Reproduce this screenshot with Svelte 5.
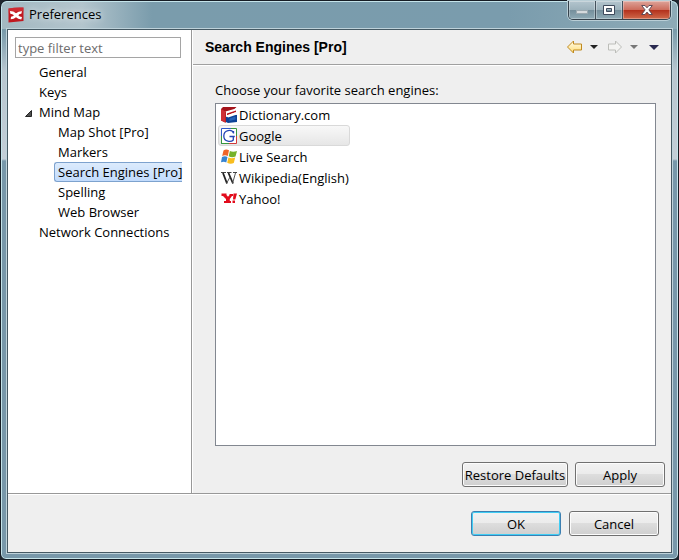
<script>
  const tree = [
    { name: 'General', level: 1 },
    { name: 'Keys', level: 1 },
    { name: 'Mind Map', level: 1, open: true },
    { name: 'Map Shot [Pro]', level: 2 },
    { name: 'Markers', level: 2 },
    { name: 'Search Engines [Pro]', level: 2 },
    { name: 'Spelling', level: 2 },
    { name: 'Web Browser', level: 2 },
    { name: 'Network Connections', level: 1 }
  ];
  const engines = [
    { name: 'Dictionary.com', icon: 'books' },
    { name: 'Google', icon: 'google' },
    { name: 'Live Search', icon: 'flag' },
    { name: 'Wikipedia(English)', icon: 'wiki' },
    { name: 'Yahoo!', icon: 'yahoo' }
  ];
  let page = $state('Search Engines [Pro]');
  let engine = $state('Google');
  let filter = $state('');
</script>

<div class="window">
  <header class="titlebar">
    <svg class="logo" width="16" height="16" viewBox="0 0 16 16">
      <path d="M.5 1.500 Q8 0 15.500 .5 V14 Q8 14.500 .5 15.500 Z" fill="#c01820" />
      <path d="M.5 1.500 Q8 0 15.500 .5 V4 Q8 4 .5 6Z" fill="#d83840" opacity=".6" />
      <path d="M2 4 Q5.500 4 8 6.300 Q11 3.800 14 4.200 L13.300 6.800 Q11.500 6.800 10.300 8.200 Q11.500 9.700 14 10 L13.300 12.500 Q10 12.200 8 10.200 Q6 12.300 2.700 12.300 L3 9.800 Q5 9.500 6 8.300 Q4.500 6.800 2.300 6.800Z" fill="#fff" />
    </svg>
    <span class="title">Preferences</span>
    <div class="controls">
      <button class="min" aria-label="Minimize">
        <svg width="12" height="5" viewBox="0 0 12 5"><rect x=".5" y=".5" width="11" height="3" fill="#d5dadd" stroke="#9ba9b0" /></svg>
      </button>
      <button class="max" aria-label="Maximize">
        <svg width="12" height="10" viewBox="0 0 12 10"><path d="M.5.5H11.500V9.500H.5Z M3.500 3.500V6.500H8.500V3.500Z" fill="#fff" fill-rule="evenodd" stroke="#3e4a5c" /></svg>
      </button>
      <button class="close" aria-label="Close">
        <svg width="12" height="10" viewBox="0 0 12 10"><path d="M.7.500H4L6 2.800 8 .5H11.300L7.900 4.900 11.300 9.500H8L6 7.100 4 9.500H.7L4.100 4.900Z" fill="#fff" stroke="#514250" stroke-width=".9" /></svg>
      </button>
    </div>
  </header>

  <main class="client">
    <div class="body">
      <nav class="sidebar">
        <input type="text" bind:value={filter} placeholder="type filter text" aria-label="Filter preferences" />
        <ul class="tree">
          {#each tree as node}
            <li class="level{node.level}">
              {#if node.open}
                <svg class="twisty" width="7" height="7" viewBox="0 0 7 7"><path d="M6.500 .5V6.500H.5Z" fill="#505050" stroke="#262626" /></svg>
              {/if}
              <button class:selected={page === node.name} onclick={() => (page = node.name)}>{node.name}</button>
            </li>
          {/each}
        </ul>
      </nav>

      <section class="panel">
        <div class="heading">
          <h1>Search Engines [Pro]</h1>
          <div class="history">
            <button aria-label="Back">
              <svg width="16" height="14" viewBox="0 0 16 14"><defs><linearGradient id="gold" x2="0" y2="1"><stop stop-color="#fffdf0" /><stop offset="1" stop-color="#ffdc70" /></linearGradient></defs><path d="M1.500 7 7.500 1V4H15.500V10H7.500V13Z" fill="url(#gold)" stroke="#c08a20" stroke-linejoin="round" /></svg>
            </button>
            <button aria-label="Back history"><svg width="8" height="4" viewBox="0 0 8 4"><path d="M0 0H8L4 4Z" fill="#222" /></svg></button>
            <button aria-label="Forward">
              <svg width="16" height="14" viewBox="0 0 16 14"><path d="M15.500 7 9.500 1V4H2.500V10H9.500V13Z" fill="#f4f4f2" stroke="#bcbdb9" stroke-linejoin="round" /></svg>
            </button>
            <button aria-label="Forward history"><svg width="8" height="4" viewBox="0 0 8 4"><path d="M0 0H8L4 4Z" fill="#777" /></svg></button>
            <button aria-label="Menu"><svg width="10" height="5" viewBox="0 0 10 5"><path d="M0 0H10L5 5Z" fill="#292950" /></svg></button>
          </div>
        </div>

        <div class="content">
          <p id="engines-label">Choose your favorite search engines:</p>
          <ul class="engines" aria-labelledby="engines-label">
            {#each engines as item}
              <li>
                <button class:selected={engine === item.name} onclick={() => (engine = item.name)}>
                  <svg width="16" height="16" viewBox="0 0 16 16">
                    {#if item.icon === 'books'}
                      <path d="M0 2 2 0H15.500L12 3.500 5 5V15.500H4L0 13.500Z" fill="#a3141b" />
                      <path d="M0 2 4.500 4.500V15.500L0 13.500Z" fill="#cf3038" />
                      <path d="M4.500 4.500 15 1.500V3.500L6 6.500Z" fill="#fff" />
                      <path d="M6 6.500 15 3.500V5L6 8.500Z" fill="#b5141c" />
                      <path d="M5 10 13 7 16 8V15L7 16 5 15Z" fill="#0c4296" />
                      <path d="M5 8.500 14 5.500 16 6V7.500L7 10.500Z" fill="#fff" />
                      <path d="M8.500 11.500 14.500 9.500V12.500L8.500 14Z" fill="#2463b8" />
                    {:else if item.icon === 'google'}
                      <rect x="1" y="1" width="14" height="14" fill="#fff" />
                      <path d="M.5 16V.5H10" fill="none" stroke="#3058c8" />
                      <path d="M10 .5H15.500V9" fill="none" stroke="#38983c" />
                      <path d="M15.500 8V15.500H8" fill="none" stroke="#d03a3a" />
                      <path d="M.5 8V15.500H8" fill="none" stroke="#38983c" />
                      <path d="M12.500 5.500V3M12.500 5C11 1 2.800 1.500 2.800 8C2.800 14.500 10.500 14 12.300 12V8.500M8.500 8.500H13.800" fill="none" stroke="#2446b4" stroke-width="1.300" />
                    {:else if item.icon === 'flag'}
                      <path d="M2.500 1.500Q5 -.3 8 1.300L6.800 7Q4 5.500 1.200 7Z" fill="#ef6429" />
                      <path d="M8.900 2Q12 3.500 16 2L14.500 7.500Q11 9 7.700 7.300Z" fill="#76b22a" />
                      <path d="M1 8Q4 6.500 6.500 8L5.300 13.500Q3 12 0 13.300Z" fill="#3683d0" />
                      <path d="M7.400 8.400Q10.500 10 14.200 8.500L12.800 14Q9.500 15.500 6.200 13.800Z" fill="#f8bd1f" />
                    {:else if item.icon === 'wiki'}
                      <path d="M0 2.500H5M6 2.500H10.500M12 2.500H16" stroke="#444" />
                      <path d="M2 3 6 13.500M7.500 3 12 13.500" fill="none" stroke="#222" stroke-width="1.800" />
                      <path d="M14.500 3 11.500 13.500M9 7 5.500 13.500" fill="none" stroke="#555" />
                    {:else}
                      <path d="M.5 2.500H5.500V4L7 5.800 8.500 4V3H12V5H11L8.800 8V10H10V12H3V10H5V8L2 5H.5Z" fill="#e20c1c" />
                      <path d="M12.500 2.500H16L14.300 8.500H12Z M11.500 9.500H14V12H11.500Z" fill="#e20c1c" />
                    {/if}
                  </svg>
                  {item.name}
                </button>
              </li>
            {/each}
          </ul>
          <div class="actions">
            <button class="push wide">Restore Defaults</button>
            <button class="push">Apply</button>
          </div>
        </div>
      </section>
    </div>

    <footer>
      <button class="push default">OK</button>
      <button class="push">Cancel</button>
    </footer>
  </main>
</div>

<style>
  :global(body) {
    background: #20262e;
  }

  .window,
  .window * {
    box-sizing: border-box;
  }

  .window {
    display: flex;
    flex-direction: column;
    min-height: 100vh;
    padding: 0 6px 6px;
    border: 1px solid #161c24;
    border-radius: 7px 7px 6px 6px;
    background: linear-gradient(#7899a8 0, #7a9baa 30px, #b8c6cf 70px, #c3ced7 158px, #7898aa 160px);
    box-shadow: inset 0 0 0 1px #c5e4ea;
    font: 13px/20px "Open Sans", "Noto Sans", sans-serif;
    color: #000;
  }

  button {
    padding: 0;
    border: 0;
    background: none;
    font: inherit;
    color: inherit;
  }

  svg {
    display: block;
    flex: none;
  }

  ul,
  p,
  h1 {
    margin: 0;
    padding: 0;
    list-style: none;
  }

  .titlebar {
    display: flex;
    height: 28px;
    margin: 0 -5px;
    padding: 0 6px;
    border-top: 1px solid #c5e4ea;
    border-radius: 6px 6px 0 0;
    background: linear-gradient(90deg, #a3b8c1 0, #b3c5cd 80px, #7a9cac 150px, #7a9cad 75%, #8eabb7);
  }

  .logo {
    margin-top: 5px;
  }

  .title {
    margin-top: 2px;
    padding: 0 5px;
    text-shadow: 0 0 7px #fff;
  }

  .controls {
    display: flex;
    height: 19px;
    margin: -1px 0 0 auto;
    border: 1px solid #35424c;
    border-top: 0;
    border-radius: 0 0 5px 5px;
    overflow: hidden;
    box-shadow: 0 0 0 1px #b9ced6;
  }

  .controls button {
    display: flex;
    align-items: center;
    justify-content: center;
    width: 27px;
    border-right: 1px solid #43515c;
    background: linear-gradient(#b3c5ce, #9db2bc 48%, #748e9b 50%, #8fabb6);
    box-shadow: inset 0 0 0 1px #ffffff50;
  }

  .controls .min {
    align-items: flex-end;
    padding-bottom: 4px;
  }

  .controls .close {
    width: 47px;
    border-right: 0;
    background: linear-gradient(#dda49a, #cd6d5d 48%, #b22f1b 50%, #d06a4b);
  }

  .client {
    display: flex;
    flex: 1;
    flex-direction: column;
    border: 1px solid #455963;
    outline: 1px solid #bed2da;
    background: #efefef;
  }

  .body {
    display: flex;
    flex: 1;
    border-bottom: 1px solid #989898;
  }

  .sidebar {
    width: 184px;
    padding: 7px 10px 0 7px;
    border-right: 1px solid #989898;
    background: #fff;
  }

  .sidebar input {
    display: block;
    width: 100%;
    height: 21px;
    padding: 0 2px;
    border: 1px solid #a5a5a5;
    border-radius: 0;
    background: #fff;
    font: inherit;
    outline: 0;
  }

  .sidebar input::placeholder {
    color: #6d6d6d;
    opacity: 1;
  }

  .tree {
    margin-right: -7px;
    padding-top: 4px;
  }

  .tree li {
    display: flex;
    align-items: center;
    height: 20px;
    padding-left: 20px;
  }

  .tree .level2 {
    padding-left: 39px;
  }

  .tree button {
    height: 20px;
    padding: 0 0 0 3px;
    border: 1px solid transparent;
    line-height: 18px;
    white-space: nowrap;
  }

  .tree .twisty {
    margin: 2px 3px 0 -10px;
  }

  .tree .selected {
    border-color: #7da2ce;
    border-right: 0;
    border-radius: 3px 0 0 3px;
    background: linear-gradient(#dcebfc, #c1dbfc);
  }

  .panel {
    display: flex;
    flex: 1;
    flex-direction: column;
    border-left: 1px solid #fff;
  }

  .heading {
    display: flex;
    align-items: center;
    justify-content: space-between;
    height: 35px;
    padding: 0 12px;
    border-bottom: 1px solid #a0a0a0;
    box-shadow: 0 1px #fff;
  }

  h1 {
    font: bold 14px/20px "Liberation Sans", Arial, sans-serif;
  }

  .history {
    display: flex;
    align-items: center;
    gap: 8px;
  }

  .history button:nth-child(5) {
    margin-left: 3px;
  }

  .content {
    display: flex;
    flex: 1;
    flex-direction: column;
    padding: 15px 6px 6px 22px;
  }

  .engines {
    flex: 1;
    margin: 3px 9px 0 0;
    padding: 0 2px;
    border: 1px solid #828790;
    background: #fff;
  }

  .engines li {
    height: 21px;
  }

  .engines button {
    display: flex;
    align-items: center;
    gap: 2px;
    min-width: 132px;
    height: 21px;
    padding: 0 2px;
    border: 1px solid transparent;
    border-radius: 3px;
  }

  .engines .selected {
    border-color: #d9d9d9;
    background: linear-gradient(#f8f8f8, #e6e6e6);
  }

  .actions {
    display: flex;
    justify-content: flex-end;
    gap: 7px;
    padding-top: 16px;
  }

  .push {
    width: 90px;
    height: 25px;
    border: 1px solid #707070;
    border-radius: 3px;
    background: linear-gradient(#f2f2f2, #ebebeb 48%, #dddddd 50%, #cfcfcf);
    box-shadow: inset 0 0 0 1px #fcfcfc;
    line-height: 22px;
    white-space: nowrap;
  }

  .wide {
    width: 106px;
  }

  .default {
    border-color: #3c7fb1;
    box-shadow: inset 0 0 0 1px #40cdf4;
  }

  footer {
    display: flex;
    align-items: flex-start;
    justify-content: flex-end;
    gap: 8px;
    height: 58px;
    padding: 16px 12px 0;
    border-top: 1px solid #fff;
  }
</style>
